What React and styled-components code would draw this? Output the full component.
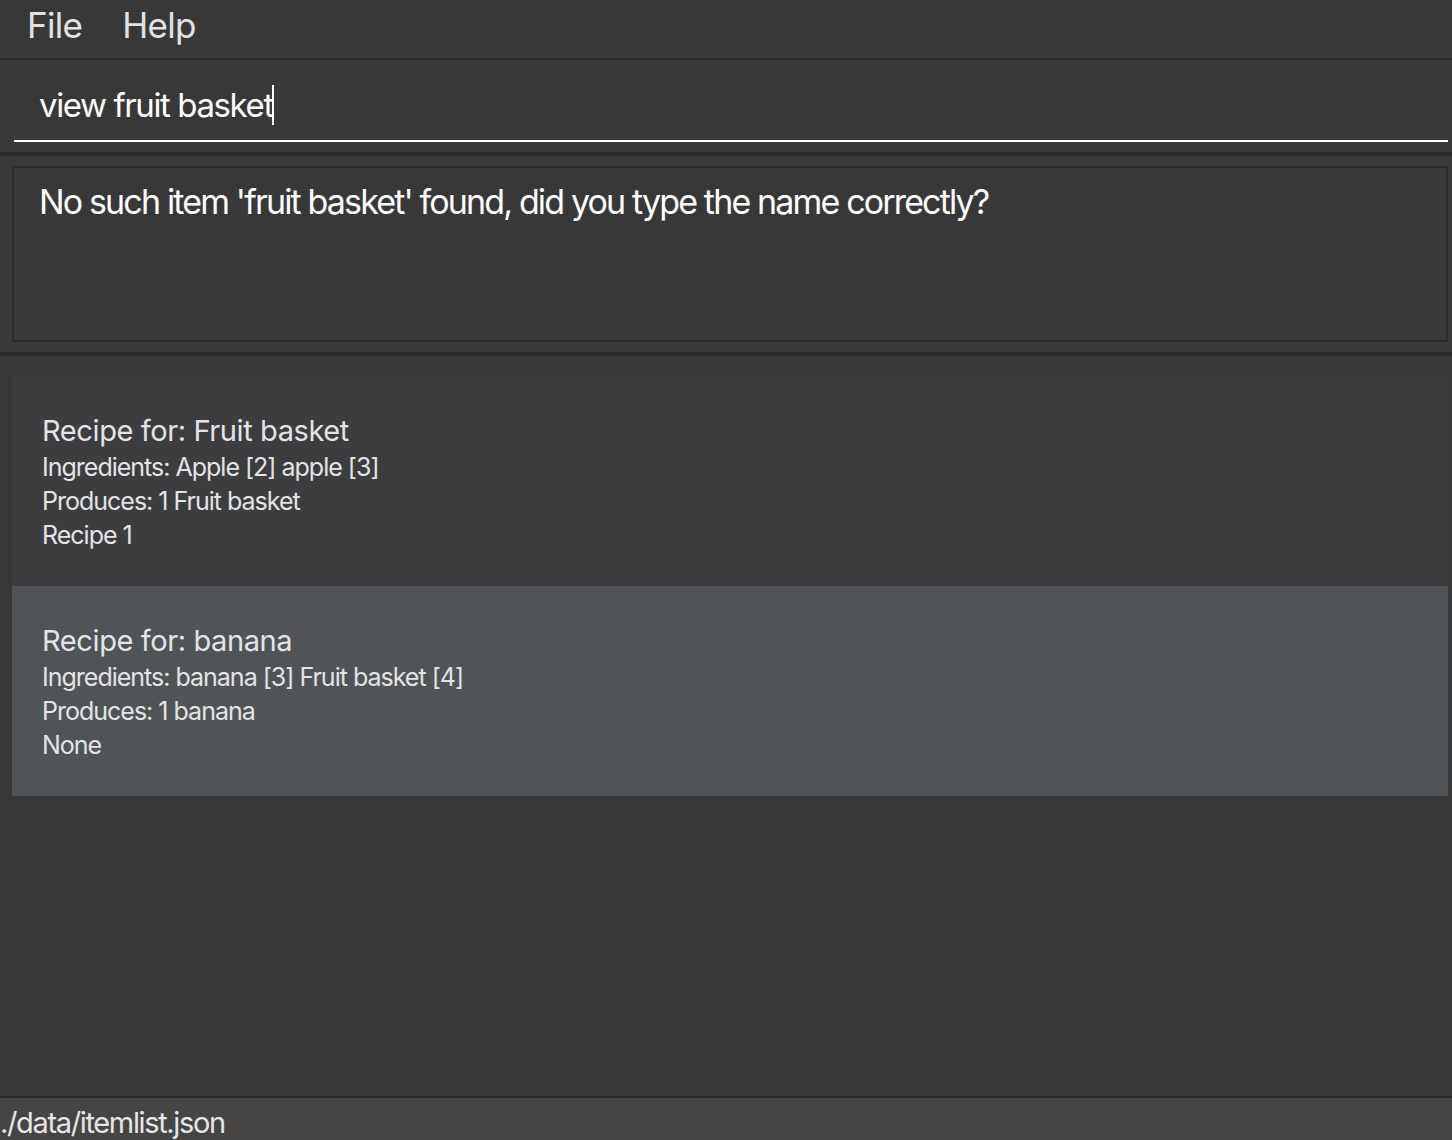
import React from 'react';
import styled, { createGlobalStyle } from 'styled-components';

const GlobalStyle = createGlobalStyle`
  html, body {
    margin: 0;
    padding: 0;
    background: #383838;
  }
  * {
    box-sizing: border-box;
  }
`

const Window = styled.div`
  display: flex;
  flex-direction: column;
  width: 1452px;
  height: 1140px;
  background-color: #383838;
  font-family: Inter, 'Open Sans', sans-serif;
  color: #ffffff;
  overflow: hidden;
`

const MenuBar = styled.nav`
  display: flex;
  align-items: center;
  gap: 40px;
  height: 60px;
  padding: 0 0 9px 27px;
  border-bottom: 2px solid #2b2b2b;
`

const MenuItem = styled.span`
  font-size: 35px;
  color: #e2e2e2;
  letter-spacing: -0.7px;
`

const CommandBox = styled.div`
  height: 96px;
  padding: 0 4px 0 14px;
  border-bottom: 4px solid #2b2b2b;
`

const CommandInput = styled.div`
  display: flex;
  align-items: center;
  height: 82px;
  padding: 10px 0 0 25px;
  border-bottom: 2px solid #ffffff;
  font-size: 33px;
  letter-spacing: -1.4px;
`

const Caret = styled.span`
  display: inline-block;
  width: 2px;
  height: 40px;
  margin-left: -1px;
  background: #ffffff;
`

const ResultPane = styled.div`
  height: 200px;
  padding: 10px 4px 10px 12px;
  border-bottom: 4px solid #2b2b2b;
`

const ResultBox = styled.div`
  height: 100%;
  border: 2px solid #2b2b2b;
  padding: 12px 25px;
  font-size: 34px;
  letter-spacing: -1.85px;
  line-height: 44px;
`

const ListPane = styled.div`
  flex: 1;
  display: flex;
  flex-direction: column;
  padding: 20px 4px 0 12px;
`

const Cell = styled.div`
  height: 210px;
  padding: 38px 30px 0;
  background-color: ${props => (props.selected ? '#4f5457' : '#3c3d3f')};
  color: #e4e4e4;
  line-height: 34px;
`

const CellTitle = styled.div`
  font-size: 29px;
  letter-spacing: -0.4px;
  margin-bottom: 2px;
`

const CellLine = styled.div`
  font-size: 25px;
  letter-spacing: -1px;
`

const StatusBar = styled.footer`
  height: 44px;
  border-top: 2px solid #2b2b2b;
  background-color: #454545;
  color: #e6e6e6;
  font-size: 29px;
  letter-spacing: -1.35px;
  line-height: 42px;
  padding-top: 4px;
`

const recipes = [
  {
    name: 'Fruit basket',
    ingredients: 'Apple [2] apple [3]',
    produces: '1 Fruit basket',
    note: 'Recipe 1',
  },
  {
    name: 'banana',
    ingredients: 'banana [3] Fruit basket [4]',
    produces: '1 banana',
    note: 'None',
    selected: true,
  },
]

export default function App() {
  return (
    <>
      <GlobalStyle />
      <Window>
        <MenuBar>
          <MenuItem>File</MenuItem>
          <MenuItem>Help</MenuItem>
        </MenuBar>

        <CommandBox>
          <CommandInput>
            view fruit basket<Caret />
          </CommandInput>
        </CommandBox>

        <ResultPane>
          <ResultBox>
            No such item 'fruit basket' found, did you type the name correctly?
          </ResultBox>
        </ResultPane>

        <ListPane>
          {recipes.map(r => (
            <Cell key={r.name} selected={r.selected}>
              <CellTitle>Recipe for: {r.name}</CellTitle>
              <CellLine>Ingredients: {r.ingredients}</CellLine>
              <CellLine>Produces: {r.produces}</CellLine>
              <CellLine>{r.note}</CellLine>
            </Cell>
          ))}
        </ListPane>

        <StatusBar>./data/itemlist.json</StatusBar>
      </Window>
    </>
  )
}
